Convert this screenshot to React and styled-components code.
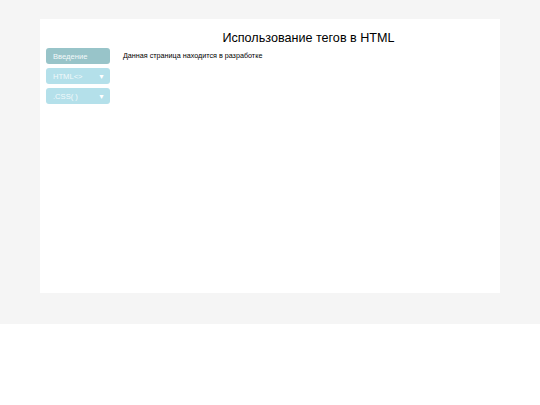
import styled, { createGlobalStyle } from "styled-components"

const GlobalStyle = createGlobalStyle`
body {
  margin: 0;
  font-family: "Liberation Sans", Arial, sans-serif;
  background: #ffffff;
}
`

const menu = [
  { id: 1, label: "Введение", active: true },
  { id: 2, label: "HTML<>", arrow: true },
  { id: 3, label: ".CSS( )", arrow: true },
]

export default function App() {
  return <Page>
    <GlobalStyle />
    <Panel>
      <Title>Использование тегов в HTML</Title>
      <Sidebar>
        {menu.map(item => {
          return <MenuButton key={item.id} $active={item.active}>
            <span>{item.label}</span>
            {item.arrow && <Arrow>▼</Arrow>}
          </MenuButton>
        })}
      </Sidebar>
      <Content>Данная страница находится в разработке</Content>
    </Panel>
  </Page>
}

const Page = styled.div`
background: #f5f5f5;
padding: 19px 40px 31px 40px;
`
const Panel = styled.div`
background: #ffffff;
height: 274px;
box-sizing: border-box;
padding: 11px 6px 0 6px;
display: grid;
grid-template-columns: 64px 1fr;
grid-template-rows: auto 1fr;
column-gap: 13px;
row-gap: 2px;
`
const Title = styled.h1`
grid-column: 2;
margin: 0;
font-weight: 400;
font-size: 12.6px;
line-height: 16px;
color: #000;
text-align: center;
`
const Sidebar = styled.div`
grid-column: 1;
display: flex;
flex-direction: column;
gap: 4px;
`
const MenuButton = styled.div`
height: 16px;
border-radius: 3px;
background: ${p => p.$active ? "#98c4c9" : "#b4e0ea"};
color: #f2f9fa;
font-size: 7.6px;
display: flex;
align-items: center;
justify-content: space-between;
padding: 0 5px 0 7px;
`
const Arrow = styled.span`
font-size: 7px;
color: #ffffff;
`
const Content = styled.p`
grid-column: 2;
margin: 3px 0 0 0;
font-size: 7.2px;
line-height: 9px;
color: #000;
`
